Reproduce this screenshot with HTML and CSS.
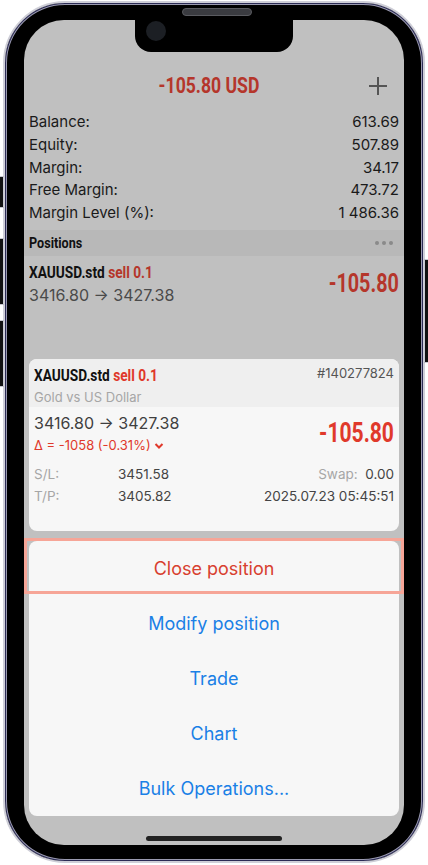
FILE: index.html
```html
<!DOCTYPE html>
<html lang="en">
<head>
    <meta charset="UTF-8">
    <meta name="viewport" content="width=device-width, initial-scale=1.0">
    <title>Trade</title>
    <link rel="stylesheet" href="styles.css">
</head>
<body>
    <div class="phone">
        <span class="side-btn btn-mute"></span>
        <span class="side-btn btn-vol-up"></span>
        <span class="side-btn btn-vol-down"></span>
        <span class="side-btn btn-power"></span>
        <span class="speaker"></span>

        <div class="screen">
            <div class="notch"><span class="camera"></span></div>

            <header class="top">
                <h1>-105.80 USD</h1>
                <svg class="plus" width="20" height="20" viewBox="0 0 20 20">
                    <path d="M10 1v18M1 10h18" stroke="#555" stroke-width="2" fill="none"/>
                </svg>
            </header>

            <div class="account">
                <div class="row"><span>Balance:</span><span>613.69</span></div>
                <div class="row"><span>Equity:</span><span>507.89</span></div>
                <div class="row"><span>Margin:</span><span>34.17</span></div>
                <div class="row"><span>Free Margin:</span><span>473.72</span></div>
                <div class="row"><span>Margin Level (%):</span><span>1 486.36</span></div>
            </div>

            <div class="section">
                <span class="section-title">Positions</span>
                <span class="dots"><i></i><i></i><i></i></span>
            </div>

            <div class="pos">
                <div>
                    <div class="symbol">XAUUSD.std <span class="red">sell 0.1</span></div>
                    <div class="prices">3416.80 → 3427.38</div>
                </div>
                <div class="profit">-105.80</div>
            </div>

            <!-- position details popup -->
            <div class="card">
                <div class="card-head">
                    <div>
                        <div class="symbol">XAUUSD.std <span class="red">sell 0.1</span></div>
                        <div class="desc">Gold vs US Dollar</div>
                    </div>
                    <div class="ticket">#140277824</div>
                </div>
                <div class="card-body">
                    <div class="price-line">
                        <div>
                            <div class="prices">3416.80 → 3427.38</div>
                            <div class="delta">Δ = -1058 (-0.31%)
                                <svg width="10" height="8" viewBox="0 0 10 8"><path d="M1.5 2l3.5 3.5L8.5 2" stroke="#e0392b" stroke-width="2" fill="none"/></svg>
                            </div>
                        </div>
                        <div class="profit">-105.80</div>
                    </div>
                    <div class="details">
                        <span class="label">S/L:</span><span>3451.58</span><span class="right"><span class="label">Swap:</span>&nbsp; 0.00</span>
                        <span class="label">T/P:</span><span>3405.82</span><span class="right">2025.07.23 05:45:51</span>
                    </div>
                </div>
            </div>

            <div class="sheet">
                <button class="action danger">Close position</button>
                <button class="action">Modify position</button>
                <button class="action">Trade</button>
                <button class="action">Chart</button>
                <button class="action">Bulk Operations...</button>
            </div>

            <div class="home"></div>
        </div>
    </div>
</body>
</html>
```

FILE: styles.css
```css
/* Page and phone frame */
body {
    margin: 0;
    background: #fff;
    font-family: Inter, "Noto Sans", sans-serif;
    color: #111;
}

.phone {
    position: relative;
    width: 422px;
    height: 862px;
    margin: 1px 0 0 3px;
    box-sizing: border-box;
    padding: 17px 19px 16px 19px;
    background: #000;
    border: 2px solid #cfcfd8;
    border-radius: 62px;
    box-shadow: inset 0 0 0 1px #2c2c55, inset 0 0 0 2px #9a9ab0;
}

.side-btn {
    position: absolute;
    width: 3px;
    background: #111;
    border: 1px solid #c9c9d2;
    border-radius: 1px;
}

.btn-mute { left: -6px; top: 173px; height: 30px; }
.btn-vol-up { left: -6px; top: 235px; height: 65px; }
.btn-vol-down { left: -6px; top: 317px; height: 65px; }
.btn-power { right: -6px; top: 256px; height: 102px; }

.speaker {
    position: absolute;
    top: 5px;
    left: 177px;
    width: 68px;
    height: 6px;
    background: #3a3b40;
    border: 1px solid #5a5b60;
    border-radius: 4px;
}

.screen {
    position: relative;
    height: 825px;
    overflow: hidden;
    background: #c0c0c0;
    border-radius: 40px;
}

.notch {
    position: absolute;
    top: 0;
    left: 111px;
    width: 158px;
    height: 32px;
    background: #000;
    border-radius: 0 0 16px 16px;
}

.camera {
    position: absolute;
    left: 11px;
    top: 1px;
    width: 20px;
    height: 20px;
    border-radius: 50%;
    background: #1c1f24;
}

/* condensed bold used by the trading app (no condensed face installed, so squeeze it) */
.top h1,
.section-title,
.symbol,
.profit {
    font-family: Roboto, sans-serif;
    font-weight: bold;
}

/* Header */
.top {
    display: grid;
    grid-template-columns: 1fr auto 1fr;
    align-items: center;
    height: 51px;
    margin-top: 40px;
    padding: 0 16px 0 5px;
}

.top h1 {
    grid-column: 2;
    margin: 0;
    font-size: 22px;
    color: #b5362b;
    transform: scaleX(0.8);
}

.plus {
    justify-self: end;
}

/* Account summary */
.account {
    padding: 0 5px;
    font-size: 15px;
    color: #1a1a1a;
}

.account .row {
    display: flex;
    justify-content: space-between;
    height: 22.75px;
    line-height: 22.75px;
}

.section {
    display: flex;
    justify-content: space-between;
    align-items: center;
    height: 26px;
    margin-top: 5px;
    padding: 0 11px 0 5px;
    background: #b8b8b8;
}

.section-title {
    font-size: 14px;
    transform: scaleX(0.9);
    transform-origin: left center;
}

.dots {
    display: flex;
    gap: 3px;
}

.dots i {
    width: 4px;
    height: 4px;
    border-radius: 50%;
    background: #8a8a8a;
}

/* Positions list */
.pos {
    display: flex;
    justify-content: space-between;
    align-items: center;
    padding: 6px 5px;
}

.symbol {
    font-size: 16.5px;
    line-height: 22px;
    transform: scaleX(0.83);
    transform-origin: left center;
}

.red {
    color: #b5362b;
}

.prices {
    font-size: 16px;
    line-height: 22px;
    color: #4a4a4a;
}

.profit {
    font-size: 25px;
    color: #b5362b;
    transform: scaleX(0.79);
    transform-origin: right center;
}

/* Detail card */
.card {
    margin: 47px 5px 0;
    border-radius: 8px;
    overflow: hidden;
    background: #f7f7f7;
}

.card-head {
    display: flex;
    justify-content: space-between;
    height: 48px;
    box-sizing: border-box;
    padding: 6px 5px 0;
    background: #efefef;
}

.card .red {
    color: #e0392b;
}

.desc {
    font-size: 13px;
    line-height: 20px;
    color: #a6a6a6;
}

.ticket {
    font-size: 13px;
    line-height: 16px;
    color: #555;
}

.card-body {
    height: 124px;
    box-sizing: border-box;
    padding: 5px 5px 0;
}

.price-line {
    display: flex;
    justify-content: space-between;
}

.card .prices {
    color: #3f3f3f;
}

.card .profit {
    margin-top: 5px;
    font-size: 27px;
    color: #e0392b;
    transform: scaleX(0.78);
}

.delta {
    font-size: 13px;
    line-height: 22px;
    color: #e0392b;
}

.details {
    display: grid;
    grid-template-columns: 84px 1fr auto;
    margin-top: 7px;
    font-size: 13.5px;
    line-height: 22px;
    color: #444;
}

.details .label {
    color: #a6a6a6;
}

.details .right {
    text-align: right;
}

/* Action sheet */
.sheet {
    position: relative;
    margin: 10px 5px 0;
    border-radius: 8px;
    background: #f7f7f7;
}

.action {
    display: block;
    position: relative;
    width: 100%;
    height: 55px;
    border: 0;
    background: none;
    font-family: Inter, "Noto Sans", sans-serif;
    font-size: 18px;
    color: #1a80e6;
}

.action.danger {
    color: #d8402f;
}

.action.danger::after {
    content: "";
    position: absolute;
    top: -3px;
    left: -5px;
    right: -5px;
    height: 56px;
    border: 3px solid #f6a597;
    box-sizing: border-box;
}

.home {
    width: 136px;
    height: 5px;
    margin: 20px auto 0;
    border-radius: 3px;
    background: #222;
}
```
